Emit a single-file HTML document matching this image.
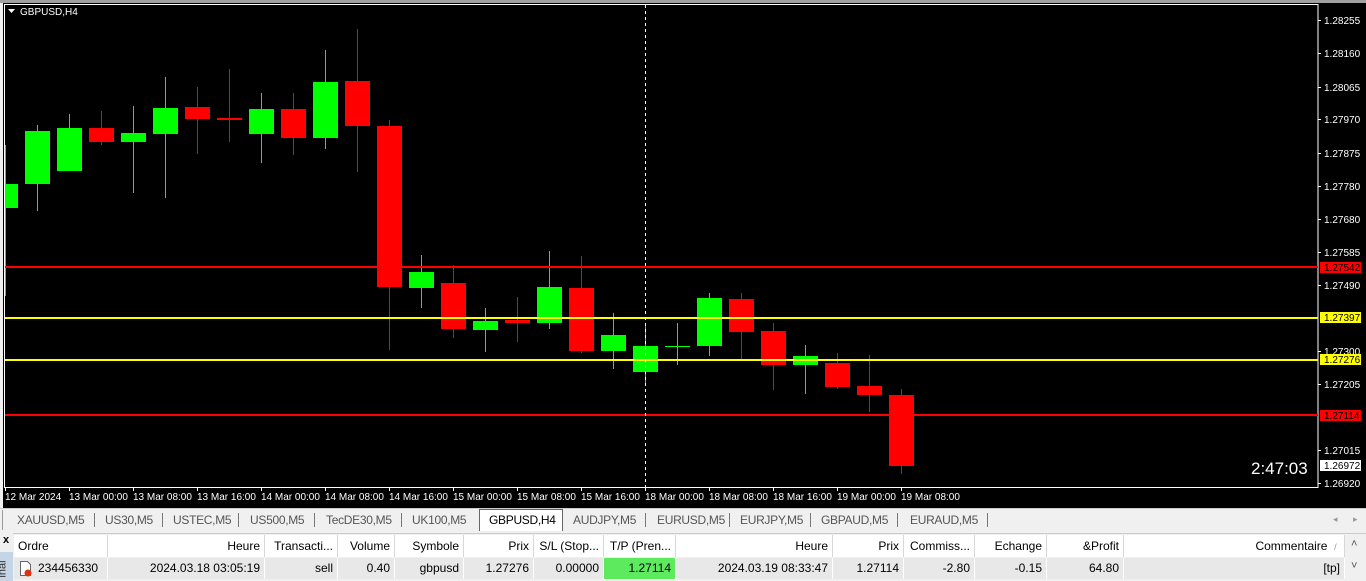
<!DOCTYPE html>
<html><head><meta charset="utf-8"><style>
*{margin:0;padding:0;box-sizing:border-box}
body{width:1366px;height:581px;overflow:hidden;background:#f0f0f0;font-family:"Liberation Sans",sans-serif;position:relative}
.abs{position:absolute}
.tab{position:absolute;top:513px;font-size:12px;color:#555;letter-spacing:-0.3px}
.sep{position:absolute;top:513px;width:1px;height:14px;background:#777}
.th,.td{position:absolute;font-size:12px;color:#000;height:22px;line-height:22px;padding:0 4px;white-space:nowrap;overflow:hidden}
.th{top:535px;background:#fff;border-right:1px solid #d8d8d8}
.td{top:558px;height:21px;line-height:21px;background:#e8e8e8;border-right:1px solid #fff}
.r{text-align:right}
</style></head><body>
<div class="abs" style="left:0;top:0;width:1366px;height:3px;background:#a0a0a0"></div>
<div class="abs" style="left:3px;top:3px;width:1363px;height:505px;background:#000"></div>
<svg class="abs" style="left:0;top:0" width="1366" height="508" font-family="Liberation Sans, sans-serif">
<rect x="4.5" y="4.5" width="1313.5" height="483" fill="none" stroke="#fff" stroke-width="1"/>
<path d="M8 9h7l-3.5 4z" fill="#fff"/>
<text x="20" y="15" fill="#fff" font-size="10">GBPUSD,H4</text>
<g stroke-width="1" shape-rendering="crispEdges">
<line x1="5.5" y1="145" x2="5.5" y2="296" stroke="#0f0"/>
<rect x="5" y="184" width="13" height="24" fill="#0f0"/>
<g id="c">
</g>
</g>
<g shape-rendering="crispEdges">
<!-- green -->
<g fill="#0f0" stroke="#0f0">
<line x1="37.5" y1="125" x2="37.5" y2="211"/><rect x="25" y="131" width="25" height="53" stroke="none"/>
<line x1="69.5" y1="114" x2="69.5" y2="171"/><rect x="57" y="128" width="25" height="43" stroke="none"/>
<line x1="133.5" y1="106" x2="133.5" y2="193"/><rect x="121" y="133" width="25" height="9" stroke="none"/>
<line x1="165.5" y1="77" x2="165.5" y2="198"/><rect x="153" y="108" width="25" height="26" stroke="none"/>
<line x1="261.5" y1="93" x2="261.5" y2="163"/><rect x="249" y="109" width="25" height="25" stroke="none"/>
<line x1="325.5" y1="50" x2="325.5" y2="149"/><rect x="313" y="82" width="25" height="56" stroke="none"/>
<line x1="421.5" y1="255" x2="421.5" y2="308"/><rect x="409" y="272" width="25" height="16" stroke="none"/>
<line x1="485.5" y1="308" x2="485.5" y2="352"/><rect x="473" y="321" width="25" height="9" stroke="none"/>
<line x1="549.5" y1="251" x2="549.5" y2="329"/><rect x="537" y="287" width="25" height="36" stroke="none"/>
<line x1="613.5" y1="313" x2="613.5" y2="369"/><rect x="601" y="335" width="25" height="16" stroke="none"/>
<line x1="645.5" y1="325" x2="645.5" y2="386"/><rect x="633" y="346" width="25" height="26" stroke="none"/>
<line x1="677.5" y1="323" x2="677.5" y2="365"/><rect x="665" y="346" width="25" height="1" stroke="none"/>
<line x1="709.5" y1="293" x2="709.5" y2="356"/><rect x="697" y="298" width="25" height="48" stroke="none"/>
<line x1="805.5" y1="345" x2="805.5" y2="394"/><rect x="793" y="356" width="25" height="9" stroke="none"/>
</g>
<g fill="#f00" stroke="#f00">
<line x1="101.5" y1="111" x2="101.5" y2="145"/><rect x="89" y="128" width="25" height="14" stroke="none"/>
<line x1="197.5" y1="87" x2="197.5" y2="154"/><rect x="185" y="107" width="25" height="12" stroke="none"/>
<line x1="229.5" y1="69" x2="229.5" y2="142"/><rect x="217" y="118" width="25" height="2" stroke="none"/>
<line x1="293.5" y1="93" x2="293.5" y2="155"/><rect x="281" y="109" width="25" height="29" stroke="none"/>
<line x1="357.5" y1="29" x2="357.5" y2="172"/><rect x="345" y="81" width="25" height="45" stroke="none"/>
<line x1="389.5" y1="120" x2="389.5" y2="350"/><rect x="377" y="126" width="25" height="161" stroke="none"/>
<line x1="453.5" y1="265" x2="453.5" y2="338"/><rect x="441" y="283" width="25" height="46" stroke="none"/>
<line x1="517.5" y1="297" x2="517.5" y2="342"/><rect x="505" y="320" width="25" height="3" stroke="none"/>
<line x1="581.5" y1="256" x2="581.5" y2="353"/><rect x="569" y="288" width="25" height="63" stroke="none"/>
<line x1="741.5" y1="293" x2="741.5" y2="361"/><rect x="729" y="299" width="25" height="33" stroke="none"/>
<line x1="773.5" y1="323" x2="773.5" y2="390"/><rect x="761" y="331" width="25" height="34" stroke="none"/>
<line x1="837.5" y1="353" x2="837.5" y2="389"/><rect x="825" y="363" width="25" height="24" stroke="none"/>
<line x1="869.5" y1="355" x2="869.5" y2="412"/><rect x="857" y="386" width="25" height="9" stroke="none"/>
<line x1="901.5" y1="389" x2="901.5" y2="474"/><rect x="889" y="395" width="25" height="71" stroke="none"/>
</g>
<rect x="5" y="266" width="1313" height="2" fill="#f00"/>
<rect x="5" y="317" width="1313" height="2" fill="#ff0"/>
<rect x="5" y="359" width="1313" height="2" fill="#ff0"/>
<rect x="5" y="414" width="1313" height="2" fill="#f00"/>
<line x1="645.5" y1="5" x2="645.5" y2="487" stroke="#fff" stroke-dasharray="3,3"/>
</g>
<g fill="#fff" font-size="10">
<g stroke="#fff" shape-rendering="crispEdges">
<line x1="1318" y1="20.5" x2="1321" y2="20.5"/><line x1="1318" y1="53.5" x2="1321" y2="53.5"/><line x1="1318" y1="87.5" x2="1321" y2="87.5"/><line x1="1318" y1="119.5" x2="1321" y2="119.5"/><line x1="1318" y1="153.5" x2="1321" y2="153.5"/><line x1="1318" y1="186.5" x2="1321" y2="186.5"/><line x1="1318" y1="219.5" x2="1321" y2="219.5"/><line x1="1318" y1="252.5" x2="1321" y2="252.5"/><line x1="1318" y1="285.5" x2="1321" y2="285.5"/><line x1="1318" y1="351.5" x2="1321" y2="351.5"/><line x1="1318" y1="384.5" x2="1321" y2="384.5"/><line x1="1318" y1="450.5" x2="1321" y2="450.5"/><line x1="1318" y1="483.5" x2="1321" y2="483.5"/>
</g>
<text x="1324" y="24">1.28255</text><text x="1324" y="57">1.28160</text><text x="1324" y="91">1.28065</text><text x="1324" y="123">1.27970</text><text x="1324" y="157">1.27875</text><text x="1324" y="190">1.27780</text><text x="1324" y="223">1.27680</text><text x="1324" y="256">1.27585</text><text x="1324" y="289">1.27490</text><text x="1324" y="355">1.27300</text><text x="1324" y="388">1.27205</text><text x="1324" y="454">1.27015</text><text x="1324" y="487">1.26920</text>
<rect x="1320" y="262" width="41" height="11" fill="#f00"/><text x="1324" y="271" fill="#000">1.27542</text>
<rect x="1320" y="312" width="41" height="11" fill="#ff0"/><text x="1324" y="321" fill="#000">1.27397</text>
<rect x="1320" y="354" width="41" height="11" fill="#ff0"/><text x="1324" y="363" fill="#000">1.27276</text>
<rect x="1320" y="410" width="41" height="11" fill="#f00"/><text x="1324" y="419" fill="#000">1.27114</text>
<rect x="1320" y="460" width="41" height="11" fill="#fff"/><text x="1324" y="469" fill="#000">1.26972</text>
<text x="1251" y="474" font-size="17">2:47:03</text>
<g stroke="#fff" shape-rendering="crispEdges">
<line x1="5.5" y1="487" x2="5.5" y2="491"/><line x1="69.5" y1="487" x2="69.5" y2="491"/><line x1="133.5" y1="487" x2="133.5" y2="491"/><line x1="197.5" y1="487" x2="197.5" y2="491"/><line x1="261.5" y1="487" x2="261.5" y2="491"/><line x1="325.5" y1="487" x2="325.5" y2="491"/><line x1="389.5" y1="487" x2="389.5" y2="491"/><line x1="453.5" y1="487" x2="453.5" y2="491"/><line x1="517.5" y1="487" x2="517.5" y2="491"/><line x1="581.5" y1="487" x2="581.5" y2="491"/><line x1="645.5" y1="487" x2="645.5" y2="491"/><line x1="709.5" y1="487" x2="709.5" y2="491"/><line x1="773.5" y1="487" x2="773.5" y2="491"/><line x1="837.5" y1="487" x2="837.5" y2="491"/><line x1="901.5" y1="487" x2="901.5" y2="491"/>
</g>
<text x="5" y="500">12 Mar 2024</text><text x="69" y="500">13 Mar 00:00</text><text x="133" y="500">13 Mar 08:00</text><text x="197" y="500">13 Mar 16:00</text><text x="261" y="500">14 Mar 00:00</text><text x="325" y="500">14 Mar 08:00</text><text x="389" y="500">14 Mar 16:00</text><text x="453" y="500">15 Mar 00:00</text><text x="517" y="500">15 Mar 08:00</text><text x="581" y="500">15 Mar 16:00</text><text x="645" y="500">18 Mar 00:00</text><text x="709" y="500">18 Mar 08:00</text><text x="773" y="500">18 Mar 16:00</text><text x="837" y="500">19 Mar 00:00</text><text x="901" y="500">19 Mar 08:00</text>
</g>
</svg>
<div class="abs" style="left:0;top:508px;width:1366px;height:23px;background:#f0f0f0;border-top:1px solid #ccc"></div>
<div class="abs" style="left:2px;top:510px;width:1px;height:20px;background:#999"></div>
<div class="abs" style="left:479px;top:509px;width:84px;height:22px;background:#fff;border:1px solid #666;border-bottom:none"></div>
<span class="tab" style="left:17px">XAUUSD,M5</span><div class="sep" style="left:94px"></div>
<span class="tab" style="left:105px">US30,M5</span><div class="sep" style="left:162px"></div>
<span class="tab" style="left:173px">USTEC,M5</span><div class="sep" style="left:238px"></div>
<span class="tab" style="left:250px">US500,M5</span><div class="sep" style="left:314px"></div>
<span class="tab" style="left:326px">TecDE30,M5</span><div class="sep" style="left:401px"></div>
<span class="tab" style="left:412px">UK100,M5</span>
<span class="tab" style="left:489px;color:#000">GBPUSD,H4</span>
<span class="tab" style="left:573px">AUDJPY,M5</span><div class="sep" style="left:645px"></div>
<span class="tab" style="left:657px">EURUSD,M5</span><div class="sep" style="left:729px"></div>
<span class="tab" style="left:740px">EURJPY,M5</span><div class="sep" style="left:810px"></div>
<span class="tab" style="left:821px">GBPAUD,M5</span><div class="sep" style="left:897px"></div>
<span class="tab" style="left:910px">EURAUD,M5</span><div class="sep" style="left:987px"></div>
<span class="abs" style="left:1333px;top:514px;font-size:9px;color:#999">◂</span><span class="abs" style="left:1353px;top:514px;font-size:9px;color:#999">▸</span>
<div class="abs" style="left:0;top:531px;width:1366px;height:2px;background:#f0f0f0"></div>
<div class="abs" style="left:13px;top:533px;width:1353px;height:1px;background:#ccc"></div>
<span class="abs" style="left:3px;top:534px;font-size:11px;font-weight:bold">x</span>
<div class="abs" style="left:0;top:552px;width:13px;height:29px;background:#c5d5e8"></div>
<span class="abs" style="left:-6px;top:563px;font-size:11px;color:#333;transform:rotate(-90deg)">inal</span>
<div class="th" style="left:14px;width:94px">Ordre</div>
<div class="th r" style="left:108px;width:157px">Heure</div>
<div class="th r" style="left:265px;width:73px">Transacti...</div>
<div class="th r" style="left:338px;width:57px">Volume</div>
<div class="th r" style="left:395px;width:69px">Symbole</div>
<div class="th r" style="left:464px;width:70px">Prix</div>
<div class="th r" style="left:534px;width:70px">S/L (Stop...</div>
<div class="th r" style="left:604px;width:72px">T/P (Pren...</div>
<div class="th r" style="left:676px;width:157px">Heure</div>
<div class="th r" style="left:833px;width:71px">Prix</div>
<div class="th r" style="left:904px;width:71px">Commiss...</div>
<div class="th r" style="left:975px;width:72px">Echange</div>
<div class="th r" style="left:1047px;width:77px">&amp;Profit</div>
<div class="th r" style="left:1124px;width:221px">Commentaire &nbsp;<span style="color:#999;font-size:9px">/</span>&nbsp;</div>
<div class="abs" style="left:1345px;top:535px;width:21px;height:46px;background:#f0f0f0"></div>
<span class="abs" style="left:1351px;top:538px;font-size:11px;color:#555">˄</span>
<span class="abs" style="left:1351px;top:560px;font-size:11px;color:#555">˅</span>
<div class="td" style="left:14px;width:94px;padding-left:24px">234456330</div>
<svg class="abs" style="left:18px;top:561px" width="16" height="16"><path d="M2.5 0.5h7l3 3v11h-10z" fill="#fff" stroke="#666"/><circle cx="10" cy="12" r="3.5" fill="#e03010"/></svg>
<div class="td r" style="left:108px;width:157px">2024.03.18 03:05:19</div>
<div class="td r" style="left:265px;width:73px">sell</div>
<div class="td r" style="left:338px;width:57px">0.40</div>
<div class="td r" style="left:395px;width:69px">gbpusd</div>
<div class="td r" style="left:464px;width:70px">1.27276</div>
<div class="td r" style="left:534px;width:70px">0.00000</div>
<div class="td r" style="left:604px;width:72px;background:#5eea5e">1.27114</div>
<div class="td r" style="left:676px;width:157px">2024.03.19 08:33:47</div>
<div class="td r" style="left:833px;width:71px">1.27114</div>
<div class="td r" style="left:904px;width:71px">-2.80</div>
<div class="td r" style="left:975px;width:72px">-0.15</div>
<div class="td r" style="left:1047px;width:77px">64.80</div>
<div class="td r" style="left:1124px;width:221px">[tp]</div>
</body></html>
